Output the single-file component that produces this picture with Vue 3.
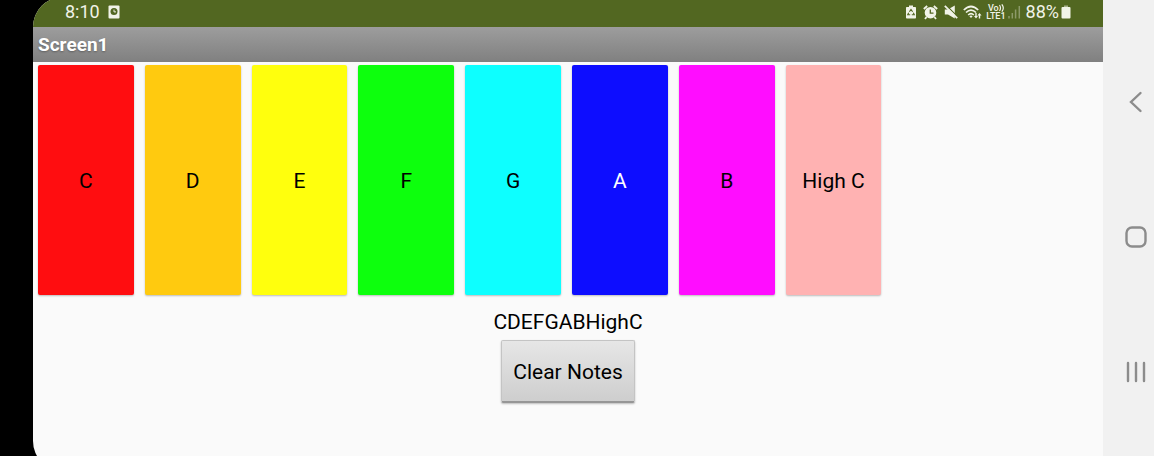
<script setup>
import { ref } from 'vue'

const keys = [
  { note: 'C', color: '#ff0d10' },
  { note: 'D', color: '#ffca0f' },
  { note: 'E', color: '#ffff0d' },
  { note: 'F', color: '#0dff0d' },
  { note: 'G', color: '#0dffff' },
  { note: 'A', color: '#0d0dff', light: true },
  { note: 'B', color: '#ff0dff' },
  { note: 'High C', color: '#ffb2b2' }
]
const played = ref('CDEFGABHighC')

function play(note) {
  played.value += note.replace(' ', '')
}
function clearNotes() {
  played.value = ''
}
</script>

<template>
  <div class="device">
    <div class="screen">
      <header class="status">
        <div class="group">
          <span>8:10</span>
          <svg class="clock-badge" width="12" height="14" viewBox="0 0 12 14">
            <rect x="0.5" y="0.5" width="11" height="13" rx="1" fill="#f1f3e8" />
            <circle cx="6" cy="6.6" r="3.5" fill="#526721" />
            <path d="M6 4.6v2.3h2" fill="none" stroke="#f1f3e8" stroke-width="1" />
          </svg>
        </div>
        <div class="group right">
          <svg width="12" height="14" viewBox="0 0 12 14">
            <path d="M4 0.5h4v1.5h2.2q0.8 0 0.8 0.8v9.9q0 0.8-0.8 0.8H1.8q-0.8 0-0.8-0.8V2.8q0-0.8 0.8-0.8H4z" fill="#f1f3e8" />
            <path d="M4.4 6.7L6 4.4l1.6 2.3M8.3 7.8l1 2H6.8M5.2 9.8H2.7l1-2" fill="none" stroke="#526721" stroke-width="1.1" />
          </svg>
          <svg class="alarm" width="15" height="15" viewBox="0 0 15 15">
            <path d="M0.8 4L4.2 1M14.2 4L10.8 1M3.5 12L2 14M11.5 12l1.5 2" stroke="#f1f3e8" stroke-width="1.8" />
            <circle cx="7.5" cy="7.7" r="5.8" fill="#f1f3e8" />
            <path d="M7.3 4.4v3.7h3.2" fill="none" stroke="#526721" stroke-width="1.3" />
          </svg>
          <svg class="mute" width="14" height="14" viewBox="0 0 14 14">
            <path d="M0.8 4.6h3L10.8 0.4v13L4 9.6H0.8z" fill="#f1f3e8" />
            <path d="M1.9 0L14 12.1" stroke="#526721" stroke-width="1.2" />
            <path d="M0.8 0.8L13.2 13.2" stroke="#f1f3e8" stroke-width="1.7" />
          </svg>
          <svg class="wifi" width="19" height="15" viewBox="0 0 19 15">
            <g fill="none" stroke="#f1f3e8" stroke-width="1.7">
              <path d="M0.8 5Q8 -2 15.2 5" />
              <path d="M3 7.5Q8 2.8 13 7.5" />
              <path d="M5.2 10Q8 7.4 10.8 10" />
            </g>
            <path d="M6.4 11.2Q8 9.8 9.6 11.2L8 13z" fill="#f1f3e8" />
            <path d="M11 11h1.3V8h1.4v3H15l-2 2.6zM14.4 10.5L16.5 8l2.1 2.5h-1.4v3h-1.4v-3z" fill="#f1f3e8" />
          </svg>
          <span class="volte">
            <span>Vo<svg width="5" height="8" viewBox="0 0 5 8"><path d="M0.5 1q2 3 0 6M2.8 0.3q3 3.7 0 7.4" fill="none" stroke="#f1f3e8" stroke-width="1.2" /></svg></span>
            <span>LTE1</span>
          </span>
          <svg class="signal" width="13" height="14" viewBox="0 0 13 14">
            <path d="M1 11v2.5M4.3 8v5.5M7.6 4.5v9M11.3 1v12.5" stroke="#8c9a69" stroke-width="1.5" />
          </svg>
          <span class="percent">88%</span>
          <svg class="battery" width="10" height="15" viewBox="0 0 10 15">
            <rect x="3" y="0.5" width="4" height="2" fill="#a7b18b" />
            <rect x="0.5" y="2" width="9" height="11.5" rx="1" fill="#f1f3e8" />
          </svg>
        </div>
      </header>
      <h1 class="title">Screen1</h1>
      <main>
        <div class="keys">
          <button
            v-for="k in keys"
            :key="k.note"
            class="key"
            :class="{ light: k.light }"
            :style="{ backgroundColor: k.color }"
            @click="play(k.note)"
          >{{ k.note }}</button>
        </div>
        <p class="notes">{{ played }}</p>
        <button class="clear" @click="clearNotes">Clear Notes</button>
      </main>
    </div>
    <nav class="navbar">
      <button aria-label="Back">
        <svg width="24" height="24" viewBox="0 0 24 24"><path d="M16.5 3L7 12L16.5 21" /></svg>
      </button>
      <button aria-label="Home">
        <svg width="24" height="24" viewBox="0 0 24 24"><rect x="2.5" y="2.5" width="19" height="19" rx="5.5" /></svg>
      </button>
      <button aria-label="Recent apps">
        <svg width="24" height="24" viewBox="0 0 24 24"><path d="M4 3v18M12 3v18M20 3v18" /></svg>
      </button>
    </nav>
  </div>
</template>

<style>
body {
  margin: 0;
  background: #000;
}
</style>

<style scoped>
.device {
  display: flex;
  height: 100vh;
  padding-left: 33px;
  box-sizing: border-box;
  overflow: hidden;
  background: #000;
  font-family: Roboto, sans-serif;
}
.screen {
  flex: 1;
  min-width: 0;
  margin: -3px 0 -15px;
  border-radius: 30px 0 0 30px;
  overflow: hidden;
  background: #fafafa;
}
.status {
  display: flex;
  justify-content: space-between;
  align-items: center;
  height: 24px;
  padding: 3px 32px;
  background: #526721;
  color: #f1f3e8;
  font-size: 18px;
  line-height: 24px;
}
.group {
  display: flex;
  align-items: center;
}
.group svg {
  display: block;
  flex: none;
}
.clock-badge {
  margin-left: 8px;
}
.alarm {
  margin-left: 6px;
}
.mute {
  margin-left: 6px;
}
.wifi {
  margin-left: 5px;
}
.volte {
  display: flex;
  flex-direction: column;
  align-items: center;
  margin-left: 4px;
  font-size: 9px;
  font-weight: 500;
  line-height: 8px;
}
.volte span {
  display: flex;
}
.signal {
  margin-left: 2px;
}
.percent {
  margin-left: 5px;
}
.battery {
  margin-left: 2px;
}
.title {
  margin: 0;
  padding: 0 5px;
  height: 35px;
  line-height: 36px;
  font-size: 19px;
  font-weight: 700;
  color: #fff;
  text-shadow: 0 1px 2px rgba(0, 0, 0, 0.3);
  background: linear-gradient(#9d9d9d, #808080);
}
main {
  display: flex;
  flex-direction: column;
  align-items: center;
}
button {
  font-family: inherit;
  cursor: pointer;
}
.keys {
  align-self: stretch;
  display: grid;
  grid-template-columns: repeat(10, 1fr);
  column-gap: 11px;
  padding: 3px 8px 0 5px;
}
.key {
  height: 230px;
  padding: 2px 0 0;
  border: 0;
  border-radius: 2px;
  box-shadow: 0 1px 2px rgba(0, 0, 0, 0.25);
  color: #000;
  font-size: 21px;
  white-space: nowrap;
}
.key.light {
  color: #fff;
}
.notes {
  margin: 14px 0 5px;
  min-height: 26px;
  line-height: 26px;
  font-size: 21px;
  color: #000;
}
.clear {
  height: 63px;
  padding: 2px 11px 0;
  border: 1px solid #c4c4c4;
  border-bottom: 2px solid #969696;
  border-radius: 2px;
  background: linear-gradient(#e6e6e6, #cecece);
  box-shadow: 0 1px 2px rgba(0, 0, 0, 0.25);
  color: #000;
  font-size: 21px;
}
.navbar {
  display: flex;
  flex-direction: column;
  justify-content: center;
  align-items: flex-end;
  gap: 111px;
  width: 51px;
  padding-top: 18px;
  box-sizing: border-box;
  background: #f1f1f1;
}
.navbar button {
  padding: 0 6px 0 0;
  border: 0;
  background: none;
}
.navbar svg {
  display: block;
  fill: none;
  stroke: #8c8c8c;
  stroke-width: 2.4;
  stroke-linecap: round;
}
</style>
